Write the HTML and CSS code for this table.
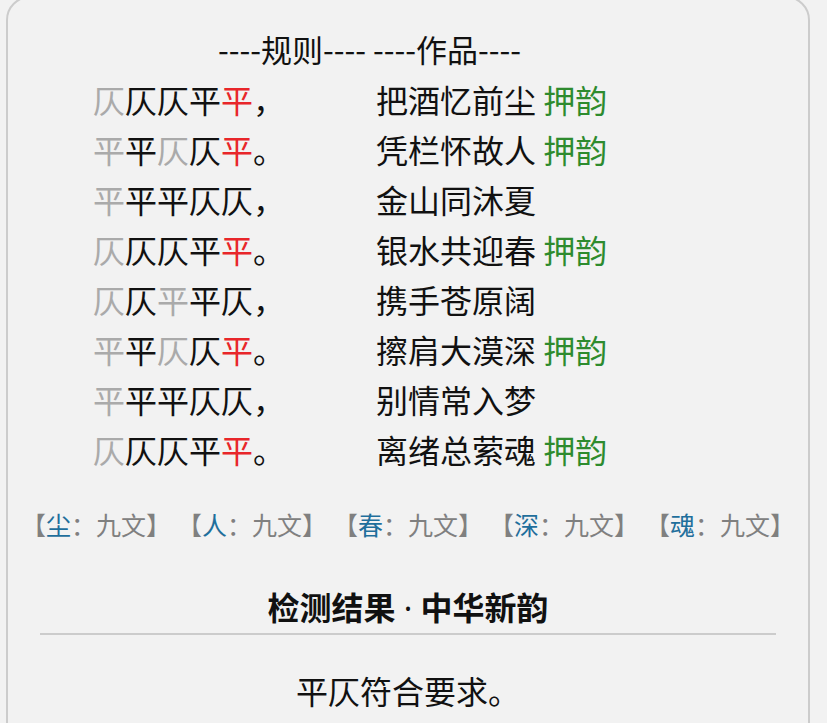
FILE: index.html
```html
<!DOCTYPE html>
<html lang="zh">
<head>
<meta charset="utf-8">
<link rel="stylesheet" href="styles.css">
</head>
<body>
<div class="card">
  <div class="head">----规则---- ----作品----</div>
  <div class="poem">
    <div class="rule"><span class="g">仄</span>仄仄平<span class="r">平</span>，</div>
    <div class="line">把酒忆前尘 <span class="ok">押韵</span></div>
    <div class="rule"><span class="g">平</span>平<span class="g">仄</span>仄<span class="r">平</span>。</div>
    <div class="line">凭栏怀故人 <span class="ok">押韵</span></div>
    <div class="rule"><span class="g">平</span>平平仄仄，</div>
    <div class="line">金山同沐夏</div>
    <div class="rule"><span class="g">仄</span>仄仄平<span class="r">平</span>。</div>
    <div class="line">银水共迎春 <span class="ok">押韵</span></div>
    <div class="rule"><span class="g">仄</span>仄<span class="g">平</span>平仄，</div>
    <div class="line">携手苍原阔</div>
    <div class="rule"><span class="g">平</span>平<span class="g">仄</span>仄<span class="r">平</span>。</div>
    <div class="line">擦肩大漠深 <span class="ok">押韵</span></div>
    <div class="rule"><span class="g">平</span>平平仄仄，</div>
    <div class="line">别情常入梦</div>
    <div class="rule"><span class="g">仄</span>仄仄平<span class="r">平</span>。</div>
    <div class="line">离绪总萦魂 <span class="ok">押韵</span></div>
  </div>
  <div class="rhymes">
    <span class="rh">【<b>尘</b>：九文】</span><span class="rh">【<b>人</b>：九文】</span><span class="rh">【<b>春</b>：九文】</span><span class="rh">【<b>深</b>：九文】</span><span class="rh">【<b>魂</b>：九文】</span>
  </div>
  <div class="result-title">检测结果<span class="dot"> · </span>中华新韵</div>
  <div class="result">平仄符合要求。</div>
</div>
</body>
</html>
```

FILE: styles.css
```css
html, body {
  margin: 0;
  padding: 0;
  background: #f2f2f2;
}
body {
  font-family: "Noto Sans CJK SC", "Noto Sans", sans-serif;
  color: #111;
  overflow: hidden;
}
.card {
  margin: -4px 17px 0 6px;
  border: 2px solid #cccccc;
  border-radius: 24px;
  background: #f2f2f2;
  padding: 30px 32px 40px;
  height: 900px;
}
.head {
  font-size: 31px;
  line-height: 42px;
  padding-left: 178px;
  margin-bottom: 4px;
}
.poem {
  display: grid;
  grid-template-columns: 283px auto;
  padding-left: 53px;
  font-size: 32px;
  line-height: 50px;
}
.g { color: #aaaaaa; }
.r { color: #e8262a; }
.ok { color: #2e8b2e; }
.rhymes {
  margin: 30px -22px 0;
  display: flex;
  justify-content: center;
  gap: 6px;
  font-size: 25px;
  line-height: 40px;
  color: #808080;
  white-space: nowrap;
}
.rh {
  flex: none;
}
.rhymes b {
  font-weight: normal;
  color: #1f6f9c;
}
.result-title {
  margin-top: 42px;
  text-align: center;
  font-size: 32px;
  font-weight: bold;
  line-height: 40px;
  padding-bottom: 5px;
  border-bottom: 2px solid #cccccc;
}
.dot {
  font-family: "Noto Sans", sans-serif;
  font-weight: normal;
}
.result {
  margin-top: 30px;
  text-align: center;
  font-size: 32px;
  line-height: 50px;
}
```
